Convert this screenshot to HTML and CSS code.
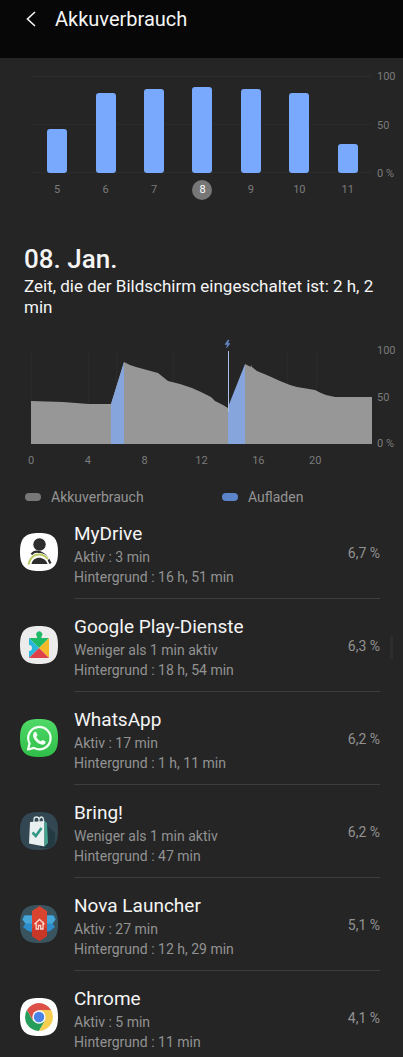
FILE: index.html
```html
<!DOCTYPE html>
<html lang="de">
<head>
<meta charset="utf-8">
<meta name="viewport" content="width=device-width, initial-scale=1">
<title>Akkuverbrauch</title>
<link rel="stylesheet" href="styles.css">
</head>
<body>
<header class="topbar">
  <button class="back" type="button" aria-label="Zurück">
    <svg width="10" height="16" viewBox="0 0 10 16" fill="none" stroke="currentColor" stroke-width="1.6"><path d="M9 1 1.500 8 9 15"/></svg>
  </button>
  <h1 class="title">Akkuverbrauch</h1>
</header>

<main>
  <section class="chart week" aria-label="Akkustand pro Tag">
    <div class="plot">
      <div class="bars">
        <div class="slot"><div class="bar" style="height:45%"></div></div>
        <div class="slot"><div class="bar" style="height:82%"></div></div>
        <div class="slot"><div class="bar" style="height:87%"></div></div>
        <div class="slot"><div class="bar" style="height:89%"></div></div>
        <div class="slot"><div class="bar" style="height:87%"></div></div>
        <div class="slot"><div class="bar" style="height:82%"></div></div>
        <div class="slot"><div class="bar" style="height:30%"></div></div>
      </div>
      <div class="days">
        <button class="day" type="button">5</button>
        <button class="day" type="button">6</button>
        <button class="day" type="button">7</button>
        <button class="day selected" type="button" aria-pressed="true"><span>8</span></button>
        <button class="day" type="button">9</button>
        <button class="day" type="button">10</button>
        <button class="day" type="button">11</button>
      </div>
    </div>
    <div class="scale"><span>100</span><span>50</span><span>0 %</span></div>
  </section>

  <section class="summary">
    <h2 class="date">08. Jan.</h2>
    <p class="screen-time">Zeit, die der Bildschirm eingeschaltet ist: 2 h, 2 min</p>
  </section>

  <section class="chart hours" aria-label="Akkustand im Tagesverlauf">
    <div class="plot">
      <svg class="level" viewBox="0 0 341 106" preserveAspectRatio="none" aria-hidden="true">
        <path d="M.5 12V105M57.500 12V105M85.500 12V105M142.500 12V105M256.500 12V105M285.500 12V105" stroke="#2a2a2a"/>
        <path fill="#979797" d="M0 63 32 64 58 66H80L93 24 99 27 105 29 116 32 127 35 132 39 137 43 149 46 161 50 170 54 180 59 184 63 192 67 197 70 214 65 220 27 221 29 226 33 238 38 249 43 259 47 266 49 284 52 290 55 295 57 304 59H341V106H0Z"/>
        <path fill="#85a5dc" d="M80 66 93 24V106H80ZM197 69 214 26V106H197Z"/>
        <path fill="#979797" d="M214 26 220 29 224 33 230 36V106H214Z"/>
        <path d="M197.500 13V74" stroke="#a9bfe6"/>
        <path fill="#6789c8" stroke="#6789c8" stroke-width=".5" d="M197 2 194 6.500H196.500L195.500 10 199 5.500H196.800L198 2Z"/>
      </svg>
      <div class="ticks"><span>0</span><span>4</span><span>8</span><span>12</span><span>16</span><span>20</span></div>
    </div>
    <div class="scale"><span>100</span><span>50</span><span>0 %</span></div>
  </section>

  <div class="legend">
    <span class="key usage">Akkuverbrauch</span>
    <span class="key charge">Aufladen</span>
  </div>

  <ul class="apps">
    <li class="app">
      <svg class="icon" viewBox="0 0 38 38" aria-hidden="true">
        <path fill="#fff" d="M19 0C33 0 38 5 38 19S33 38 19 38 0 33 0 19 5 0 19 0Z"/>
        <circle cx="19.500" cy="11.500" r="6.200" fill="#2d2d2d"/>
        <path d="M11.500 21.500C15 16.500 25 17.500 30.500 30.500" fill="none" stroke="#2d2d2d" stroke-width="2.200"/>
        <path d="M8.500 31.500C11 20.500 21 18.500 28.500 26.500" fill="none" stroke="#fff" stroke-width="3.400"/>
        <path d="M8.500 31.500C11 20.500 21 18.500 28 26" fill="none" stroke="#b9ca62" stroke-width="2"/>
        <path fill="#2d2d2d" d="M11.500 31C13 22.500 25 22.500 27.500 31Z"/>
      </svg>
      <div class="info"><h3 class="name">MyDrive</h3><p class="detail">Aktiv : 3 min</p><p class="detail">Hintergrund : 16 h, 51 min</p></div>
      <span class="share">6,7 %</span>
    </li>
    <li class="app">
      <svg class="icon" viewBox="0 0 38 38" aria-hidden="true">
        <path fill="#ececec" d="M19 0C33 0 38 5 38 19S33 38 19 38 0 33 0 19 5 0 19 0Z"/>
        <path fill="#20b968" d="M9 12H17V10.500A3 3 0 1 1 21.500 10.500V12H29L19 22Z"/>
        <path fill="#29b8dc" d="M9 12 19 22 9 32V25A3 3 0 1 0 9 19Z"/>
        <path fill="#f4b929" d="M29 12V32L19 22Z"/>
        <path fill="#de4148" d="M9 32 19 22 29 32Z"/>
      </svg>
      <div class="info"><h3 class="name">Google Play-Dienste</h3><p class="detail">Weniger als 1 min aktiv</p><p class="detail">Hintergrund : 18 h, 54 min</p></div>
      <span class="share">6,3 %</span>
    </li>
    <li class="app">
      <svg class="icon" viewBox="0 0 38 38" aria-hidden="true">
        <defs><linearGradient id="wa" x2="0" y2="1"><stop stop-color="#50d967"/><stop offset="1" stop-color="#2fbd49"/></linearGradient></defs>
        <path fill="url(#wa)" d="M19 0C33 0 38 5 38 19S33 38 19 38 0 33 0 19 5 0 19 0Z"/>
        <path d="M8 30.500 9.600 24.500A11.200 11.200 0 1 1 14 28.900Z" fill="none" stroke="#f3fff4" stroke-width="2.200" stroke-linejoin="round"/>
        <path fill="#f3fff4" d="M14.300 13.200C15 12.500 16 12.600 16.400 13.400L17.500 16C17.700 16.600 16.500 17.600 16.300 18.100 17.200 20 18.700 21.500 20.900 22.300 21.500 22 22.200 20.800 22.800 21L25.300 22.300C25.900 22.600 25.500 24.200 24.800 24.900 22.800 26.600 19.500 25.200 17.500 23.700 15.300 22 13.600 19.600 13.100 17.500 12.800 15.700 13.400 14.200 14.300 13.200Z"/>
      </svg>
      <div class="info"><h3 class="name">WhatsApp</h3><p class="detail">Aktiv : 17 min</p><p class="detail">Hintergrund : 1 h, 11 min</p></div>
      <span class="share">6,2 %</span>
    </li>
    <li class="app">
      <svg class="icon" viewBox="0 0 38 38" aria-hidden="true">
        <path fill="#334753" d="M19 0C33 0 38 5 38 19S33 38 19 38 0 33 0 19 5 0 19 0Z"/>
        <path fill="#243a43" d="M24 10 35 21 35 31 31 36 20 36Z"/>
        <path d="M14 10V7.500Q14 5 16.500 5T19 7.500V10M19.500 7Q20 5 21.500 5T23.500 7.500V10" fill="none" stroke="#dce7e8" stroke-width="1.300"/>
        <path fill="#e9f0ef" d="M10 10 24.500 9V34.500L9 31.500Z"/>
        <path fill="#43a38f" d="M24.500 9 27 11 28 31 24.500 34.500Z"/>
        <path d="M12.500 20.500 15.800 24 21.500 16" fill="none" stroke="#329782" stroke-width="2.600"/>
      </svg>
      <div class="info"><h3 class="name">Bring!</h3><p class="detail">Weniger als 1 min aktiv</p><p class="detail">Hintergrund : 47 min</p></div>
      <span class="share">6,2 %</span>
    </li>
    <li class="app">
      <svg class="icon" viewBox="0 0 38 38" aria-hidden="true">
        <path fill="#39535f" d="M19 0C33 0 38 5 38 19S33 38 19 38 0 33 0 19 5 0 19 0Z"/>
        <path fill="#2d8dcb" d="M4 10.500H12V27L8 26 3 22 5.500 18.500 2.500 14.500ZM34 10.500H26V27L30 26 35 22 32.500 18.500 35.500 14.500Z"/>
        <path fill="#46a6d8" d="M5 10.500H12V18.500H5.500L2.500 14.500ZM33 10.500H26V18.500H32.500L35.500 14.500Z"/>
        <path fill="#d94430" d="M12 6 19.500 1 27 6V31L19.500 36 12 31Z"/>
        <path fill="#c63728" d="M12 24 19.500 19 27 24V31L19.500 36 12 31Z"/>
        <path d="M14.500 19.300 19.500 14.500 24.500 19.300M16.200 18V24H18.500V20.500H20.700V24H23V16.500" fill="none" stroke="#ffd9cf" stroke-width="1.300"/>
      </svg>
      <div class="info"><h3 class="name">Nova Launcher</h3><p class="detail">Aktiv : 27 min</p><p class="detail">Hintergrund : 12 h, 29 min</p></div>
      <span class="share">5,1 %</span>
    </li>
    <li class="app">
      <svg class="icon" viewBox="0 0 38 38" aria-hidden="true">
        <path fill="#fff" d="M19 0C33 0 38 5 38 19S33 38 19 38 0 33 0 19 5 0 19 0Z"/>
        <path fill="#dc5048" d="M6.900 12A14 14 0 0 1 31.100 12H19L12.900 22.500Z"/>
        <path fill="#269d5a" d="M6.900 12A14 14 0 0 0 19 33L25.100 22.500H12.900Z"/>
        <path fill="#f8ce50" d="M31.100 12A14 14 0 0 1 19 33L25.100 22.500 19 12Z"/>
        <circle cx="19" cy="19" r="6.700" fill="#f5f5f5"/><circle cx="19" cy="19" r="5.200" fill="#4b82e8"/>
      </svg>
      <div class="info"><h3 class="name">Chrome</h3><p class="detail">Aktiv : 5 min</p><p class="detail">Hintergrund : 11 min</p></div>
      <span class="share">4,1 %</span>
    </li>
  </ul>
</main>
<div class="scroll-thumb"></div>
</body>
</html>
```
FILE: styles.css
```css
* { box-sizing: border-box; }

body {
  position: relative;
  margin: 0;
  background: #252525;
  color: #f5f5f5;
  font-family: Roboto, sans-serif;
}

h1, h2, h3, p, ul { margin: 0; padding: 0; font-weight: 400; }

button {
  padding: 0;
  border: 0;
  background: none;
  color: inherit;
  font: inherit;
}

.topbar {
  display: flex;
  align-items: flex-start;
  gap: 19px;
  height: 58px;
  padding: 7px 26px;
  background: #070707;
}

.back { display: flex; align-items: center; height: 24px; }
.title { font-size: 20px; line-height: 24px; }

.chart {
  display: flex;
  gap: 5px;
  color: #7b7b7b;
  font-size: 11px;
  line-height: 14px;
}

.plot { flex: 1; min-width: 0; }

.scale {
  display: flex;
  flex-direction: column;
  justify-content: space-between;
  width: 26px;
}

.week { padding: 12px 0 0 31px; }
.week .scale { height: 111px; }

.bars {
  display: flex;
  height: 97px;
  margin-top: 6px;
  padding-left: 2px;
  background: linear-gradient(#2c2c2c, #2c2c2c) 0 0 / 100% 1px no-repeat,
    linear-gradient(#2a2a2a, #2a2a2a) 0 50% / 100% 1px no-repeat,
    linear-gradient(#2c2c2c, #2c2c2c) 0 100% / 100% 1px no-repeat;
}

.slot { display: flex; flex: 1; align-items: flex-end; justify-content: center; }
.bar { width: 20px; border-radius: 3px; background: #78a9fc; }

.days { display: flex; height: 20px; margin-top: 7px; padding-left: 2px; }
.day { display: flex; flex: 1; align-items: center; justify-content: center; }
.selected span {
  width: 20px;
  border-radius: 50%;
  background: #777;
  color: #fff;
  line-height: 20px;
}

.summary { padding: 43px 24px 0; }
.date { font-size: 26px; font-weight: 500; line-height: 32px; }
.screen-time { margin-top: 1px; font-size: 17px; line-height: 21px; }

.hours { padding: 20px 0 0 31px; }
.hours .scale { height: 107px; margin-top: 6px; }
.level { display: block; width: 100%; height: 106px; }
.ticks { display: grid; grid-template-columns: repeat(6, 1fr); margin-top: 10px; }
.ticks span { width: 14px; margin-left: -7px; text-align: center; }

.legend {
  display: grid;
  grid-template-columns: 1fr 1fr;
  padding: 20px 0 0 25px;
  gap: 16px;
  color: #949494;
  font-size: 14px;
  line-height: 18px;
}

.key { display: flex; align-items: center; gap: 10px; }
.key::before { width: 16px; height: 8px; border-radius: 4px; background: #777; content: ""; }
.charge::before { background: #5c84c8; }

.apps { list-style: none; }
.app { display: flex; gap: 16px; padding: 0 23px 0 20px; }
.icon { flex: none; width: 38px; height: 38px; margin-top: 27px; }
.info { flex: 1; padding: 15px 0 11px; border-bottom: 1px solid #3d3d3d; }
.app:last-child .info { padding-bottom: 5px; border-bottom: 0; }
.name { font-size: 19px; line-height: 26px; }
.detail { color: #929292; font-size: 14px; line-height: 20px; }
.share {
  margin-left: -16px;
  padding-top: 37px;
  border-bottom: 1px solid #3d3d3d;
  color: #929292;
  font-size: 14px;
  line-height: 20px;
}
.app:last-child .share { border-bottom: 0; }

.scroll-thumb {
  position: absolute;
  top: 636px;
  right: 10px;
  width: 3px;
  height: 23px;
  background: #2d2d2d;
}
```
